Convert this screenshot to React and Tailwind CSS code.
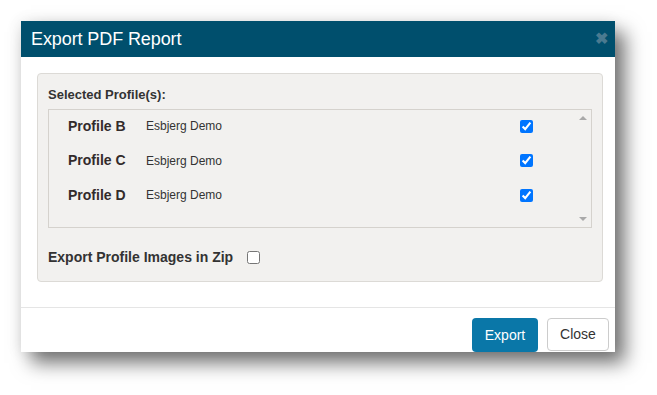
import React from "react";

const rows = ["Profile B", "Profile C", "Profile D"];

export default function App() {
  return (
    <div className="w-[657px] h-[395px] bg-white pt-[21px] pl-[21px] overflow-hidden" style={{ fontFamily: '"Liberation Sans", Arial, sans-serif' }}>
      <div className="w-[594px] h-[331px] bg-white flex flex-col shadow-[10px_11px_18px_rgba(0,0,0,0.55),-2px_0_14px_rgba(0,0,0,0.08)]">
        <div className="h-[36px] bg-[#004f6d] flex items-center justify-between pl-[10px] pr-[7px]">
          <span className="text-white text-[18px] leading-none tracking-[-0.1px]">Export PDF Report</span>
          <span className="text-[#4a7a90] text-[16px] font-bold leading-none">✖</span>
        </div>
        <div className="pt-[16px] pl-[16px] pr-[12px] h-[250px]">
          <div className="bg-[#f2f1ef] border border-[#dcdad6] rounded-[4px] h-[209px] px-[10px] pt-[13px]">
            <div className="text-[13px] font-bold text-[#333] leading-[15px] h-[22px]">Selected Profile(s):</div>
            <div className="border border-[#d5d2cd] h-[119px] flex">
              <div className="flex-1 flex flex-col -mt-[1px]">
                {rows.map((r) => (
                  <div key={r} className="h-[34.5px] flex items-center pl-[19px]">
                    <span className="w-[78px] text-[14px] font-bold text-[#332b2b]">{r}</span>
                    <span className="flex-1 text-[12px] text-[#333]">Esbjerg Demo</span>
                    <input type="checkbox" checked readOnly className="m-0 w-[13px] h-[13px] mr-[41px]" />
                  </div>
                ))}
              </div>
              <div className="w-[17px] flex flex-col justify-between items-center py-[6px]">
                <div className="w-0 h-0 border-l-[4px] border-r-[4px] border-b-[4px] border-l-transparent border-r-transparent border-b-[#a9a9a9]" />
                <div className="w-0 h-0 border-l-[4px] border-r-[4px] border-t-[4px] border-l-transparent border-r-transparent border-t-[#a9a9a9]" />
              </div>
            </div>
            <div className="flex items-center mt-[19px]">
              <span className="text-[14px] font-bold text-[#333]">Export Profile Images in Zip</span>
              <input type="checkbox" readOnly className="m-0 ml-[14px] w-[13px] h-[13px]" />
            </div>
          </div>
        </div>
        <div className="border-t border-[#e5e5e5] flex-1 flex justify-end items-start pt-[10px] pr-[6px] gap-[9px] overflow-hidden">
          <button className="w-[66px] h-[34px] bg-[#0a77a8] text-white text-[14px] rounded-[4px]">Export</button>
          <button className="w-[62px] h-[33px] bg-white border border-[#ccc] text-[#333] text-[14px] rounded-[4px]">Close</button>
        </div>
      </div>
    </div>
  );
}
